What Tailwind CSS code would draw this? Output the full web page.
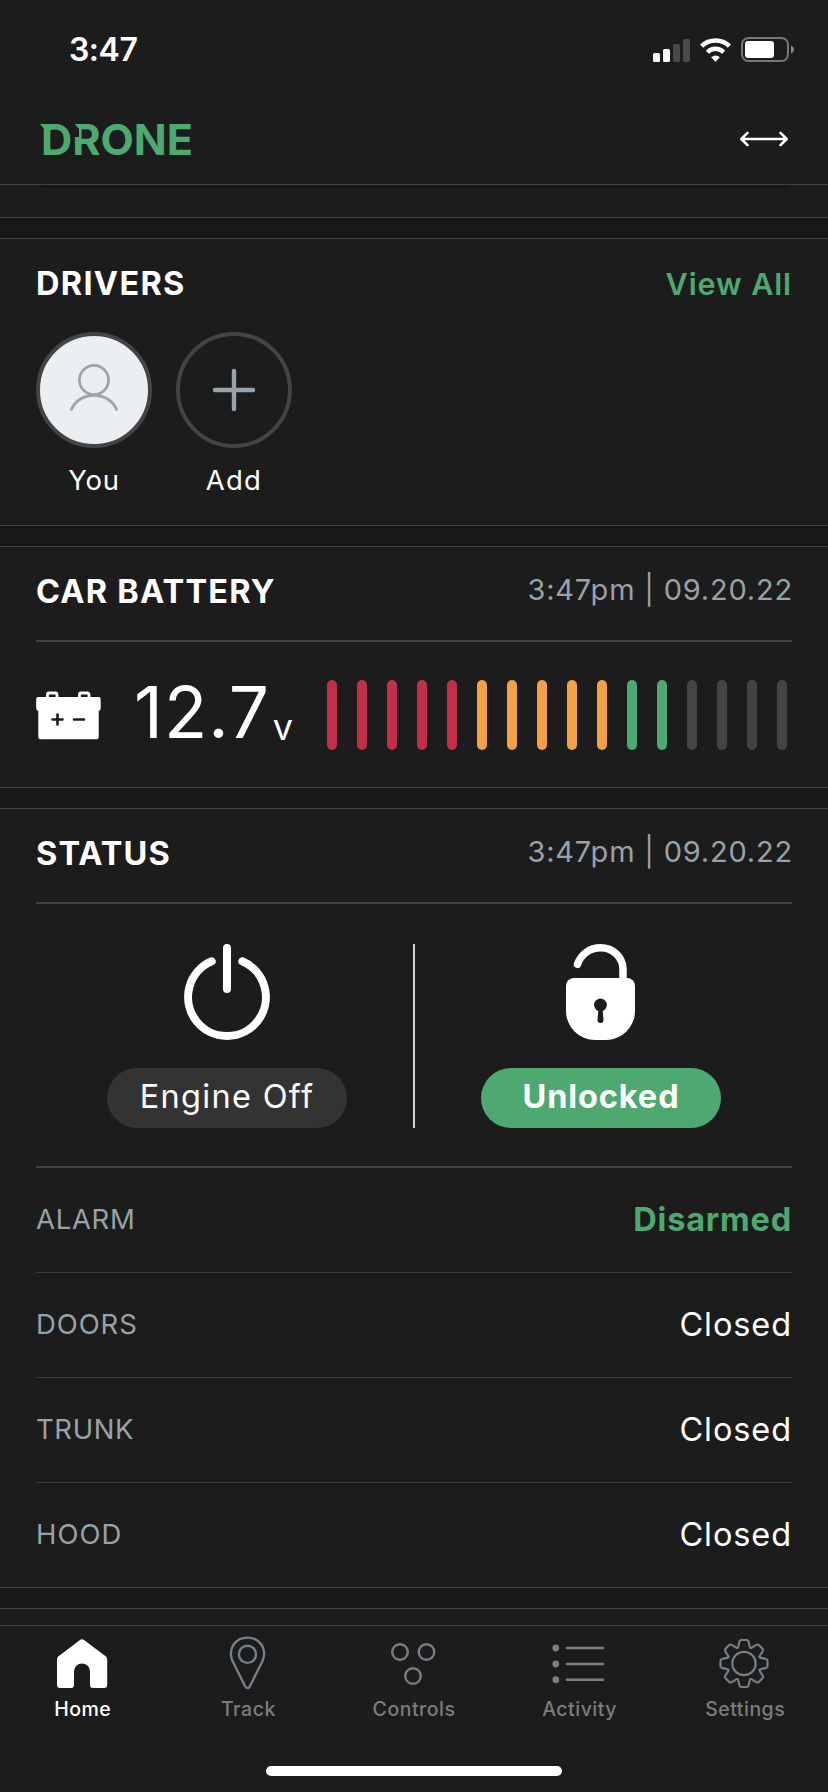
<!DOCTYPE html>
<html lang="en">
<head>
    <meta charset="UTF-8">
    <meta name="viewport" content="width=device-width, initial-scale=1.0">
    <title>Drone</title>
    <script src="https://cdn.jsdelivr.net/npm/@tailwindcss/browser@4"></script>
</head>
<body class="bg-[#1c1c1c] text-white font-['Inter','Open_Sans',sans-serif] w-[828px] h-[1792px] overflow-hidden flex flex-col">

    <!-- status bar + header -->
    <header class="h-[185px] shrink-0 border-b border-[#424242]">
        <div class="h-[99px] pl-[69px] pr-[34px] flex items-center justify-between">
            <span class="text-[32px] leading-none font-semibold tracking-[-0.5px]">3:47</span>
            <div class="flex items-center">
                <svg width="37" height="24" viewBox="0 0 37 24" class="mr-2.5">
                    <rect x="0" y="15" width="7" height="9" rx="1.5" fill="#fff"/>
                    <rect x="10" y="11" width="7" height="13" rx="1.5" fill="#fff"/>
                    <rect x="20" y="6" width="7" height="18" rx="1.5" fill="#494949"/>
                    <rect x="30" y="1" width="7" height="23" rx="1.5" fill="#494949"/>
                </svg>
                <svg width="31" height="24" viewBox="0 0 31 24" class="mr-2.5" fill="none" stroke="#fff">
                    <path d="M1.6 8.2a19.7 19.7 0 0 1 27.8 0" stroke-width="4.6"/>
                    <path d="M7.4 14.2a11.4 11.4 0 0 1 16.2 0" stroke-width="4.4"/>
                    <path d="M11.2 19.3a6 6 0 0 1 8.6 0L15.5 23.9z" fill="#fff" stroke="none"/>
                </svg>
                <svg width="53" height="25" viewBox="0 0 53 25">
                    <rect x="1" y="1" width="46" height="23" rx="6.5" fill="none" stroke="#77777a" stroke-width="2"/>
                    <rect x="4" y="4" width="29" height="17" rx="3.2" fill="#fff"/>
                    <path d="M50 8.5c4 1.5 4 6.5 0 8z" fill="#8a8a8a"/>
                </svg>
            </div>
        </div>
        <div class="h-20 pl-10 pr-[39px] flex items-center justify-between">
            <svg width="154" height="60" viewBox="0 0 154 60">
                <path d="M0 15h12v6H5z" fill="#4da970"/>
                <text x="1" y="46" textLength="152" lengthAdjust="spacingAndGlyphs" fill="#4da970" font-family="Inter" font-weight="700" font-size="43">DRONE</text>
                <path d="M32 12l7 8v8h-5z" fill="#1c1c1c"/>
            </svg>
            <svg width="50" height="18" viewBox="0 0 50 18" fill="none" stroke="#fff" stroke-width="2.6" stroke-linecap="round" stroke-linejoin="round">
                <path d="M3 9h44M8.500 2.800L2.300 9l6.200 6.200M41.500 2.800L47.700 9l-6.200 6.200"/>
            </svg>
        </div>
    </header>

    <div class="h-8 shrink-0 px-10">
        <div class="h-[3px] bg-[#171717] rounded-b-[3px]"></div>
    </div>
    <div class="h-[22px] shrink-0 bg-[#171717] border-y border-[#424242]"></div>

    <!-- drivers -->
    <section class="h-[286px] shrink-0 px-9">
        <div class="h-[93px] pb-[3px] flex items-center justify-between">
            <h2 class="text-[32.5px] leading-none font-bold tracking-[1.3px]">DRIVERS</h2>
            <a class="text-[30.5px] leading-none font-semibold text-[#4da970] tracking-[0.9px]">View All</a>
        </div>
        <div class="flex gap-6">
            <div class="w-[116px] flex flex-col items-center">
                <div class="size-[116px] rounded-full border-4 border-[#444446] bg-[#ebeff2] flex items-center justify-center">
                    <svg width="50" height="52" viewBox="0 0 50 52" fill="none" stroke="#9aa5ac" stroke-width="2.7" stroke-linecap="round">
                        <circle cx="25" cy="16" r="14.6"/>
                        <path d="M2.500 45.500C6 37 14.500 31.400 25 31.400S44 37 47.500 45.500"/>
                    </svg>
                </div>
                <span class="mt-[19px] text-[27.5px] leading-none tracking-[0.8px]">You</span>
            </div>
            <div class="w-[116px] flex flex-col items-center">
                <div class="size-[116px] rounded-full border-4 border-[#444446] flex items-center justify-center">
                    <svg width="44" height="44" viewBox="0 0 44 44" stroke="#98a4ad" stroke-width="4.4" stroke-linecap="round">
                        <path d="M22 3v38M3 22h38"/>
                    </svg>
                </div>
                <span class="mt-[19px] text-[27.5px] leading-none tracking-[1.2px]">Add</span>
            </div>
        </div>
    </section>

    <div class="h-[22px] shrink-0 bg-[#171717] border-y border-[#424242]"></div>

    <!-- car battery -->
    <section class="h-[240px] shrink-0 px-9">
        <div class="h-[95px] border-b-2 border-[#424242] pb-[3px] flex items-center justify-between">
            <h2 class="text-[32.5px] leading-none font-bold tracking-[1.2px]">CAR BATTERY</h2>
            <span class="text-[29px] leading-none text-[#98a2aa] tracking-[0.8px] -mr-px pb-[5px]">3:47pm | 09.20.22</span>
        </div>
        <div class="mt-[38px] h-[70px] flex items-center">
            <svg width="65" height="49" viewBox="0 0 65 49" class="shrink-0">
                <path d="M11.500 7V3.500a1.500 1.500 0 0 1 1.500-1.500h6.500a1.500 1.500 0 0 1 1.500 1.500V7M43.500 7V3.500a1.500 1.500 0 0 1 1.500-1.500h6.500a1.500 1.500 0 0 1 1.500 1.500V7" fill="none" stroke="#fff" stroke-width="2.8"/>
                <path d="M2.500 6h60a2.200 2.200 0 0 1 2.200 2.200V17a3 3 0 0 1-2 3v26a2.200 2.200 0 0 1-2.200 2.200H4.500A2.200 2.200 0 0 1 2.300 46V20A3 3 0 0 1 .2 17V8.200A2.200 2.200 0 0 1 2.500 6z" fill="#fff"/>
                <path d="M16.500 28.500h10M21.500 23.500v10M38 28.500h10" stroke="#1c1c1c" stroke-width="2.6" stroke-linecap="round"/>
            </svg>
            <div class="w-[226px] shrink-0 pl-[33px] pb-[5px] flex items-baseline leading-none">
                <span class="text-[71px] tracking-[1px]">12.7</span><span class="text-[36px] ml-[3px] translate-y-0.5">v</span>
            </div>
            <div class="flex gap-5">
                <i class="w-2.5 h-[70px] rounded-full bg-[#c03049]"></i>
                <i class="w-2.5 h-[70px] rounded-full bg-[#c03049]"></i>
                <i class="w-2.5 h-[70px] rounded-full bg-[#c03049]"></i>
                <i class="w-2.5 h-[70px] rounded-full bg-[#c03049]"></i>
                <i class="w-2.5 h-[70px] rounded-full bg-[#c03049]"></i>
                <i class="w-2.5 h-[70px] rounded-full bg-[#f2a147]"></i>
                <i class="w-2.5 h-[70px] rounded-full bg-[#f2a147]"></i>
                <i class="w-2.5 h-[70px] rounded-full bg-[#f2a147]"></i>
                <i class="w-2.5 h-[70px] rounded-full bg-[#f2a147]"></i>
                <i class="w-2.5 h-[70px] rounded-full bg-[#f2a147]"></i>
                <i class="w-2.5 h-[70px] rounded-full bg-[#4da970]"></i>
                <i class="w-2.5 h-[70px] rounded-full bg-[#4da970]"></i>
                <i class="w-2.5 h-[70px] rounded-full bg-[#444446]"></i>
                <i class="w-2.5 h-[70px] rounded-full bg-[#444446]"></i>
                <i class="w-2.5 h-[70px] rounded-full bg-[#444446]"></i>
                <i class="w-2.5 h-[70px] rounded-full bg-[#444446]"></i>
            </div>
        </div>
    </section>

    <div class="h-[22px] shrink-0 bg-[#171717] border-y border-[#424242]"></div>

    <!-- status -->
    <section class="h-[778px] shrink-0 px-9">
        <div class="h-[95px] border-b-2 border-[#424242] pb-[3px] flex items-center justify-between">
            <h2 class="text-[32.5px] leading-none font-bold tracking-[1.1px]">STATUS</h2>
            <span class="text-[29px] leading-none text-[#98a2aa] tracking-[0.8px] -mr-px pb-[5px]">3:47pm | 09.20.22</span>
        </div>
        <div class="h-[264px] border-b-2 border-[#424242] px-[5px] pt-10 pb-[38px] flex justify-center">
            <div class="flex-1 flex flex-col items-center justify-between">
                <svg width="96" height="96" viewBox="0 0 96 96" fill="none" stroke="#fff" stroke-width="8" stroke-linecap="round">
                    <path d="M48 4v41M32.700 17.300a38.900 38.900 0 1 0 30.600 0"/>
                </svg>
                <div class="w-60 h-[60px] rounded-full bg-[#333333] flex items-center justify-center text-[32.5px] leading-none tracking-[1.3px] pb-px">Engine Off</div>
            </div>
            <div class="w-0.5 bg-[#d6d6d6]"></div>
            <div class="flex-1 flex flex-col items-center justify-between">
                <svg width="96" height="96" viewBox="0 0 96 96">
                    <path d="M24.500 20.300C28 10 37 3.800 47.500 3.800 60 3.800 70 13 70 25.500V38" fill="none" stroke="#fff" stroke-width="7.5" stroke-linecap="round"/>
                    <path d="M21 34h53a8 8 0 0 1 8 8v25a29 29 0 0 1-29 29H42a29 29 0 0 1-29-29V42a8 8 0 0 1 8-8z" fill="#fff"/>
                    <circle cx="47.5" cy="61" r="6.4" fill="#1c1c1c"/>
                    <path d="M45.500 64h4l1 12a3 3 0 0 1-6 0z" fill="#1c1c1c"/>
                </svg>
                <div class="w-60 h-[60px] rounded-full bg-[#4da970] flex items-center justify-center text-[32.5px] leading-none font-bold tracking-[0.9px] pb-px">Unlocked</div>
            </div>
        </div>
        <div class="h-[105px] border-b border-[#3c3c3c] flex items-center justify-between leading-none">
            <span class="text-[27.5px] text-[#98a2aa] tracking-[0.7px]">ALARM</span>
            <span class="text-[32.5px] font-bold text-[#4da970] tracking-[0.8px]">Disarmed</span>
        </div>
        <div class="h-[105px] border-b border-[#3c3c3c] flex items-center justify-between leading-none">
            <span class="text-[27.5px] text-[#98a2aa] tracking-[0.9px]">DOORS</span>
            <span class="text-[32.5px] tracking-[0.9px]">Closed</span>
        </div>
        <div class="h-[105px] border-b border-[#3c3c3c] flex items-center justify-between leading-none">
            <span class="text-[27.5px] text-[#98a2aa] tracking-[0.6px]">TRUNK</span>
            <span class="text-[32.5px] tracking-[0.9px]">Closed</span>
        </div>
        <div class="h-[104px] flex items-center justify-between leading-none">
            <span class="text-[27.5px] text-[#98a2aa] tracking-[1px]">HOOD</span>
            <span class="text-[32.5px] tracking-[0.9px]">Closed</span>
        </div>
    </section>

    <div class="h-[22px] shrink-0 bg-[#171717] border-y border-[#424242]"></div>
    <div class="h-4 shrink-0"></div>

    <!-- tab bar -->
    <nav class="h-[167px] shrink-0 border-t border-[#424242] flex flex-col items-center justify-between pt-2.5 pb-4">
        <div class="w-full grid grid-cols-5 text-[19.5px] leading-none font-medium tracking-[0.5px] text-[#7c7c7c]">
            <div class="flex flex-col items-center gap-2.5 text-white">
                <svg width="54" height="54" viewBox="1 0 54 54" fill="#fff">
                    <path d="M25 4c1.200-1 2.800-1 4 0l22 16.500c.8.7 1.200 1.500 1.200 2.500v26a3 3 0 0 1-3 3H38a3 3 0 0 1-3-3V35.500a8 8 0 0 0-16 0V49a3 3 0 0 1-3 3H5a3 3 0 0 1-3-3V23c0-1 .4-1.800 1.200-2.500z"/>
                </svg>
                <span>Home</span>
            </div>
            <div class="flex flex-col items-center gap-2.5">
                <svg width="54" height="54" viewBox="0 0 54 54" fill="none" stroke="#747f88" stroke-width="2.4">
                    <path d="M11.300 24.500C6.600 12.500 14.500 1.600 26.500 1.600S46.400 12.500 41.700 24.500L28.800 50.500c-1 2-3.600 2-4.600 0z" stroke-linejoin="round"/>
                    <circle cx="26.5" cy="18.3" r="8.6"/>
                </svg>
                <span>Track</span>
            </div>
            <div class="flex flex-col items-center gap-2.5">
                <svg width="54" height="54" viewBox="0 0 54 54" fill="none" stroke="#747f88" stroke-width="2.4">
                    <circle cx="13" cy="16" r="7.8"/>
                    <circle cx="39.5" cy="16" r="7.8"/>
                    <circle cx="26" cy="40" r="7.8"/>
                </svg>
                <span>Controls</span>
            </div>
            <div class="flex flex-col items-center gap-2.5">
                <svg width="58" height="54" viewBox="-2 0 58 54" fill="#747f88" stroke="#747f88">
                    <g stroke="none">
                        <circle cx="2.8" cy="12" r="3.4"/>
                        <circle cx="2.8" cy="28" r="3.4"/>
                        <circle cx="2.8" cy="43.7" r="3.4"/>
                    </g>
                    <path d="M14 12h36M14 28h36M14 43.700h36" stroke-width="2.6" stroke-linecap="round"/>
                </svg>
                <span>Activity</span>
            </div>
            <div class="flex flex-col items-center gap-2.5">
                <svg width="54" height="54" viewBox="0 0 54 54" fill="none" stroke="#747f88" stroke-width="2.2" stroke-linecap="round">
                    <g transform="translate(26 27.5)">
                        <circle r="11.7"/>
                        <path id="tooth" d="M-6.400-15.600C-4.800-16.500-5.600-23.500-3-23.500H3C5.600-23.500 4.800-16.500 6.400-15.600"/>
                        <use href="#tooth" transform="rotate(45)"/>
                        <use href="#tooth" transform="rotate(90)"/>
                        <use href="#tooth" transform="rotate(135)"/>
                        <use href="#tooth" transform="rotate(180)"/>
                        <use href="#tooth" transform="rotate(225)"/>
                        <use href="#tooth" transform="rotate(270)"/>
                        <use href="#tooth" transform="rotate(315)"/>
                    </g>
                </svg>
                <span>Settings</span>
            </div>
        </div>
        <div class="w-[296px] h-2.5 rounded-full bg-white"></div>
    </nav>
</body>
</html>
